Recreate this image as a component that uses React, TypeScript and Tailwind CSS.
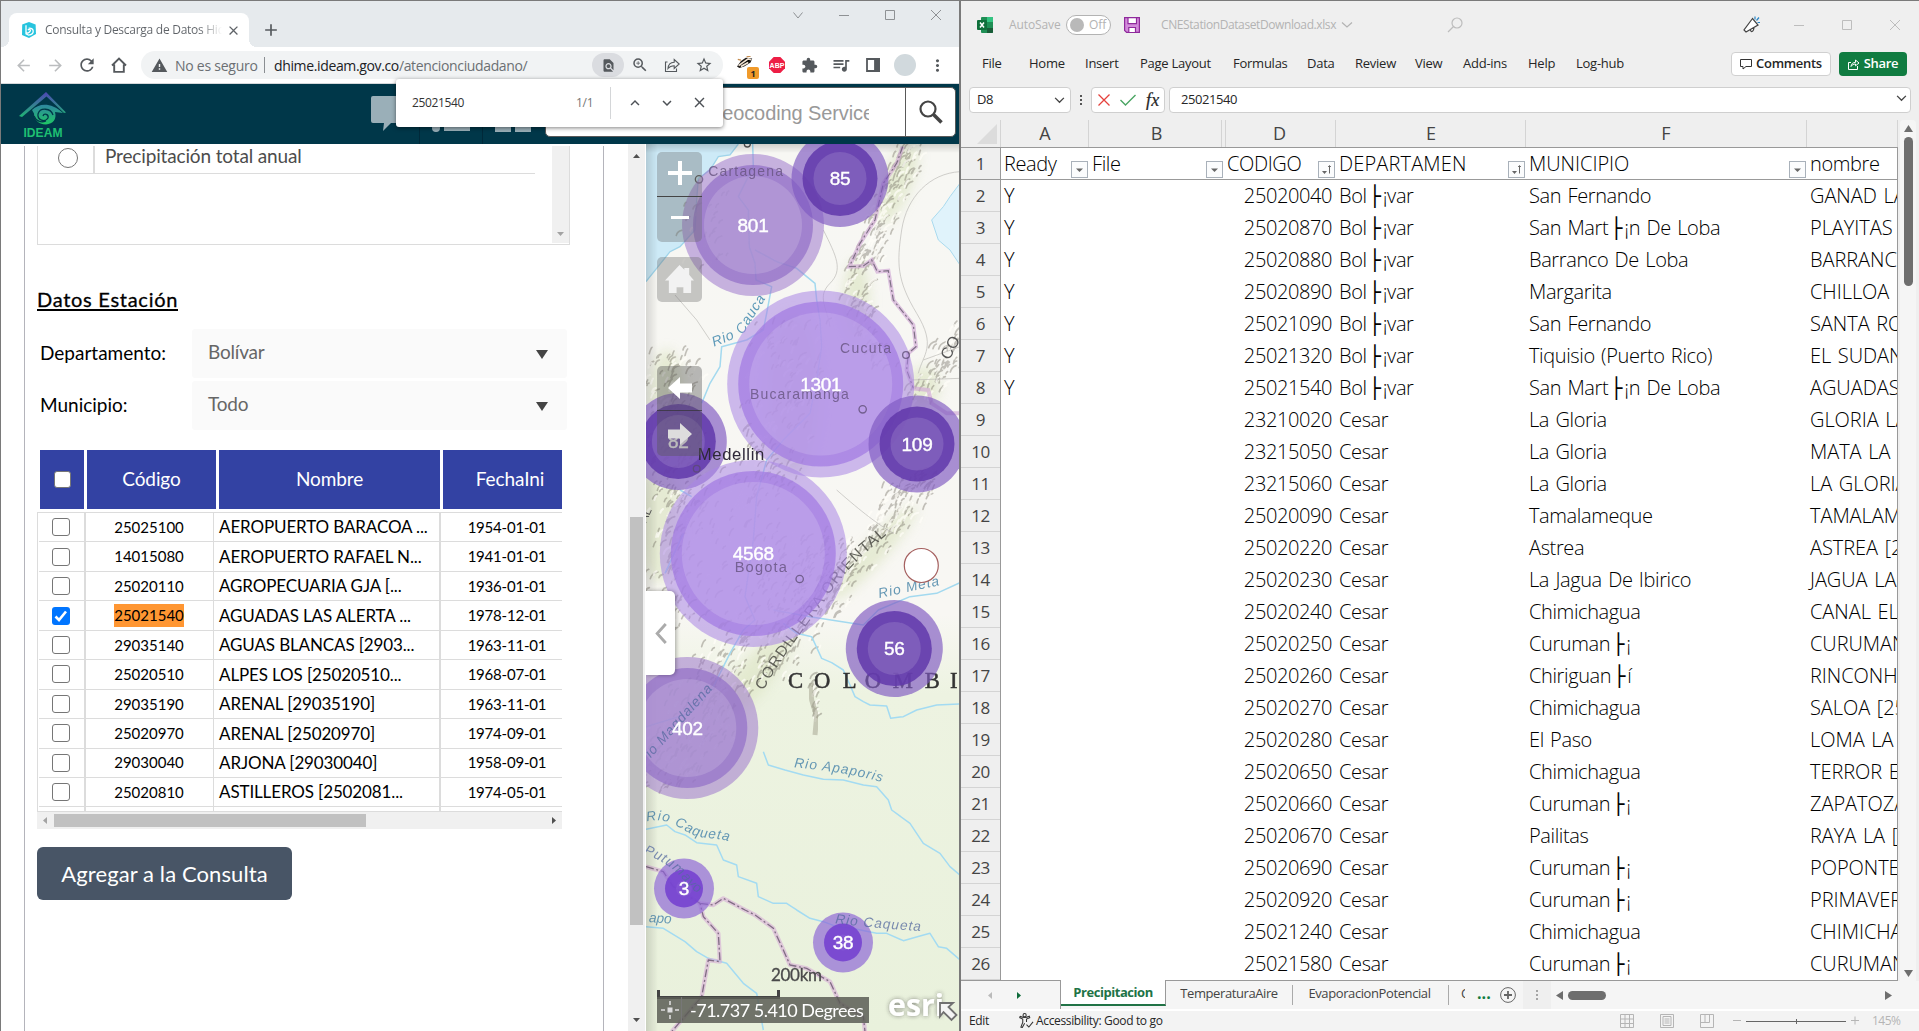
import React from 'react';
import {
  MdAdd, MdArrowBack, MdArrowForward, MdClose, MdExtension, MdFindInPage, MdKeyboardArrowDown,
  MdKeyboardArrowUp, MdMoreVert, MdQueueMusic, MdRefresh, MdStarBorder, MdWarning, MdZoomIn,
} from 'react-icons/md';

const UI = "font-['Open_Sans','Noto_Sans',sans-serif]";
const WEB = "font-['Lato','Open_Sans',sans-serif]";

/* ---------------------------------------------------------------- browser */

function Tri({ dir, className }: { dir: 'up' | 'down' | 'left' | 'right'; className: string }) {
  const d = { up: 'M0 10 5 0 10 10Z', down: 'M0 0H10L5 10Z', left: 'M10 0V10L0 5Z', right: 'M0 0 10 5 0 10Z' }[dir];
  return (
    <svg viewBox="0 0 10 10" preserveAspectRatio="none" className={className} fill="currentColor">
      <path d={d} />
    </svg>
  );
}

function TabStrip() {
  return (
    <div className="flex h-[46px] shrink-0 bg-[#e6eaed]">
      <div className="flex w-2 items-end overflow-hidden"><div className="h-2 w-2 bg-[radial-gradient(circle_at_0_0,#e6eaed_8px,#fff_8px)]" /></div>
      <div className="mt-3 flex w-[240px] items-center rounded-t-lg bg-white">
        <svg viewBox="0 0 16 16" className="ml-3 size-4">
          <path d="M8 0 14.6 2.6 15 12 8 16 1 13 1.2 2.6Z" fill="#27c4de" />
          <path d="M5 3.2v8.6l2.6 1.4c3-.4 4.8-2.2 4.6-4.4-.3-2-2.3-3-4.600-2.400M5 11.400c2.400-.2 4-1.200 4.400-2.800.2-1.300-1.600-1.800-2.500-.5" fill="none" stroke="#fff" strokeWidth="1.300" />
        </svg>
        <div className="ml-[8px] w-[177px] overflow-hidden whitespace-nowrap bg-gradient-to-r from-[#5f6368] from-87% to-transparent bg-clip-text text-[12px] tracking-[-0.27px] text-transparent">
          Consulta y Descarga de Datos Hidro
        </div>
        <MdClose className="ml-[4px] size-[15px] text-[#5f6368]" />
      </div>
      <div className="flex w-2 items-end"><div className="h-2 w-2 bg-[radial-gradient(circle_at_100%_0,#e6eaed_8px,#fff_8px)]" /></div>
      <MdAdd className="ml-[4px] mt-[19px] size-[20px] text-[#55595d]" />
      <div className="ml-auto mt-[6px] flex h-4 items-center gap-[30px] pr-[15px]">
        <svg viewBox="0 0 16 16" className="size-4" fill="none" stroke="#8e9194"><path d="M3.500 5.500 8 11l4.500-5.500" /></svg>
        <svg viewBox="0 0 16 16" className="size-4" fill="none" stroke="#8e9194"><path d="M3 8.500h10" /></svg>
        <svg viewBox="0 0 16 16" className="size-4" fill="none" stroke="#8e9194"><path d="M3.500 3.500h9v9h-9Z" /></svg>
        <svg viewBox="0 0 16 16" className="size-4" fill="none" stroke="#8e9194"><path d="m3 3 10 10M13 3 3 13" /></svg>
      </div>
    </div>
  );
}

function Cell({ children, className = '' }: { children: React.ReactNode; className?: string }) {
  return <div className={`flex h-full w-8 shrink-0 items-center justify-center ${className}`}>{children}</div>;
}

function Toolbar() {
  return (
    <div className="flex h-[37px] shrink-0 items-center border-b border-[#d5d8db] bg-white pl-[6px] text-[#55595d]">
      <Cell className="text-[#bbbdbf]"><MdArrowBack className="size-[19px]" /></Cell>
      <Cell className="text-[#bbbdbf]"><MdArrowForward className="size-[19px]" /></Cell>
      <Cell><MdRefresh className="size-[20px]" /></Cell>
      <Cell>
        <svg viewBox="0 0 16 16" className="size-4" fill="none" stroke="currentColor" strokeWidth="1.900"><path d="M1 8.500 8 1.500l7 7M3.200 7.500v7.400h9.600V7.500" /></svg>
      </Cell>
      <div className="ml-[6px] flex h-7 w-[582px] items-center rounded-full bg-[#f1f3f4]">
        <MdWarning className="ml-[10px] size-[17px]" />
        <span className="ml-[7px] w-[83px] whitespace-nowrap text-[14px] tracking-[-0.25px] text-[#6b6f73]">No es seguro</span>
        <span className="ml-[6px] h-4 w-px bg-[#8a8e92]" />
        <span className="ml-[9px] w-[318px] whitespace-nowrap text-[14px] tracking-[-0.36px] text-[#6b6f73]">
          <span className="text-[#202124]">dhime.ideam.gov.co</span>/atencionciudadano/
        </span>
        <Cell><span className="flex h-6 w-8 items-center justify-center rounded-full bg-[#dadce0]"><MdFindInPage className="size-[15px]" /></span></Cell>
        <Cell><MdZoomIn className="size-[18px]" /></Cell>
        <Cell>
          <svg viewBox="0 0 16 16" className="size-4" fill="none" stroke="currentColor" strokeWidth="1.100"><path d="M3.500 5H1.500v9.500h11v-3M4 11.500c.3-4.500 2.500-6 6.200-6.200V2.500l5 4.500-5 4.500V8.700c-3 0-4.700.8-6.200 2.800Z" /></svg>
        </Cell>
        <Cell><MdStarBorder className="size-[18px]" /></Cell>
      </div>
      <div className="ml-[6px] flex h-full">
        <Cell>
          <div className="relative size-5">
            <svg viewBox="0 0 20 16" className="absolute left-[2px] top-[1px] h-[13px] w-4">
              <path d="M0 13 5 6l6-4 8 1-2 5-8 5-6 2Z" fill="#1d1a18" /><path d="M2 12 14 3.500l4 1M5 13l9-5" stroke="#f3e6d6" strokeWidth="2" />
              <path d="M1 4l4 1M12 1l5-1" stroke="#c48b4d" strokeWidth="1.500" />
            </svg>
            <span className="absolute left-[12px] top-[12px] flex h-3 w-3 items-center justify-center rounded-[2px] bg-[#f09a2a] text-[9px] font-bold leading-none text-[#222]">1</span>
          </div>
        </Cell>
        <Cell>
          <svg viewBox="0 0 16 16" className="size-4"><path d="M4.700 0h6.600L16 4.700v6.600L11.300 16H4.700L0 11.300V4.700Z" fill="#ed1e45" /><text x="8" y="10.600" textAnchor="middle" fontSize="7" fontWeight="700" fontFamily="Liberation Sans" fill="#fff">ABP</text></svg>
        </Cell>
        <Cell><MdExtension className="size-[17px]" /></Cell>
        <Cell><MdQueueMusic className="size-[20px]" /></Cell>
        <Cell>
          <svg viewBox="0 0 14 14" className="size-[14px]" fill="none" stroke="currentColor" strokeWidth="1.800"><path d="M1 1h12v12H1Z" /><path d="M9 1h4v12H9Z" fill="currentColor" /></svg>
        </Cell>
        <Cell><span className="size-[22px] rounded-full bg-[#d1d9dd]" /></Cell>
        <Cell><MdMoreVert className="size-[19px]" /></Cell>
      </div>
    </div>
  );
}

function FindBar() {
  return (
    <div className="absolute left-[395px] top-[78px] z-20 flex h-[48px] w-[327px] items-center rounded-[3px] bg-white shadow-[0_1px_4px_rgba(0,0,0,0.5)]">
      <span className="ml-4 w-[164px] text-[12px] tracking-[-0.37px] text-[#333]">25021540</span>
      <span className="w-[34px] text-[12px] tracking-[-0.3px] text-[#777]">1/1</span>
      <span className="h-8 w-px bg-[#d4d6d8]" />
      <div className="ml-2 flex text-[#4d5156]">
        <Cell><MdKeyboardArrowUp className="size-[18px]" /></Cell>
        <Cell><MdKeyboardArrowDown className="size-[18px]" /></Cell>
        <Cell><MdClose className="size-[17px]" /></Cell>
      </div>
    </div>
  );
}

function SiteHeader() {
  return (
    <div className="flex h-[60px] shrink-0 items-start bg-[#003749]">
      <svg viewBox="0 0 48 46" className="ml-[18px] mt-2 h-[46px] w-12">
        <defs>
          <linearGradient id="roof" x1="0" y1="0" x2="0" y2="1"><stop offset="0" stopColor="#4f45b5" /><stop offset="1" stopColor="#1fb573" /></linearGradient>
          <linearGradient id="eye" x1="0" y1="0" x2="0" y2="1"><stop offset="0" stopColor="#2f86a0" /><stop offset="1" stopColor="#1fc765" /></linearGradient>
        </defs>
        <path d="M0 24 27 0 47 20.500 45 21 27.500 4.500 3 25Z" fill="url(#roof)" />
        <path d="M13 18c7-7 19-8 31 3l-8-1c2 7-2 12-9 12.500-8-.5-12-5-12-11Z" fill="url(#eye)" />
        <path d="M34 23c-2-7-13-8-15-1-1 6 7 9 10 4 1-4-4-5-5-2M15 24c2 5 7 7 12 5" fill="none" stroke="#003749" strokeWidth="1.300" />
        <text x="4.500" y="45" fontFamily="Liberation Sans" fontSize="12" fontWeight="700" fill="#1fc072" textLength="39" lengthAdjust="spacingAndGlyphs">IDEAM</text>
      </svg>
      <svg viewBox="0 0 34 36" className="ml-[304px] mt-3 h-9 w-[34px] text-[#9aafb8]" fill="currentColor"><path d="M2 0h32v27H20l-8 8 1-8H2Q0 27 0 25V2Q0 0 2 0Z" /></svg>
      <div className="ml-[14px] h-full w-px bg-[#00293a]" />
      <div className="ml-3 mt-[37px] flex h-3 items-start gap-1 text-[#9aafb8]"><span className="mt-[3px] size-2 rounded-full bg-current" /><span className="mt-[5px] h-[5px] w-[26px] bg-current" /></div>
      <div className="ml-3 h-full w-px bg-[#00293a]" />
      <div className="ml-[12px] mt-[37px] flex gap-1"><span className="h-[11px] w-4 bg-[#9aafb8]" /><span className="h-[11px] w-4 bg-[#9aafb8]" /></div>
      <div className="ml-auto mr-[3px] mt-[3px] flex h-[50px] w-[411px] rounded-[5px] border border-[#595959] bg-white">
        <div className="flex flex-1 items-center justify-end pr-[36px]">
          <div className="w-[323px] overflow-hidden whitespace-nowrap pt-px text-right font-['Liberation_Sans',sans-serif] text-[20px] tracking-[-0.1px] text-[#999]">
            <span className="mr-[-5px]">Esri World Geocoding Service</span>
          </div>
        </div>
        <div className="flex w-[50px] items-center justify-center border-l border-[#595959]">
          <svg viewBox="0 0 24 24" className="size-6" fill="none" stroke="#444"><circle cx="9" cy="9" r="7.500" strokeWidth="2.200" /><path d="m14.500 14.500 8 8" strokeWidth="3.600" /></svg>
        </div>
      </div>
    </div>
  );
}

const STATIONS: [string, string, string][] = [
  ['25025100', 'AEROPUERTO BARACOA ...', '1954-01-01'],
  ['14015080', 'AEROPUERTO RAFAEL N...', '1941-01-01'],
  ['25020110', 'AGROPECUARIA GJA [...', '1936-01-01'],
  ['25021540', 'AGUADAS LAS ALERTA ...', '1978-12-01'],
  ['29035140', 'AGUAS BLANCAS [2903...', '1963-11-01'],
  ['25020510', 'ALPES LOS [25020510...', '1968-07-01'],
  ['29035190', 'ARENAL [29035190]', '1963-11-01'],
  ['25020970', 'ARENAL [25020970]', '1974-09-01'],
  ['29030040', 'ARJONA [29030040]', '1958-09-01'],
  ['25020810', 'ASTILLEROS [2502081...', '1974-05-01'],
];

function Box({ on = false, header = false }: { on?: boolean; header?: boolean }) {
  if (on)
    return (
      <span className="flex size-[18px] items-center justify-center rounded-[3px] bg-[#0075ff]">
        <svg viewBox="0 0 14 14" className="size-[14px]" fill="none" stroke="#fff" strokeWidth="2.600"><path d="m1.500 7.500 3.500 3.500L12 2.500" /></svg>
      </span>
    );
  return <span className={`rounded-[3px] border-[1.5px] border-[#767676] bg-white ${header ? 'size-[17px]' : 'size-[18px]'}`} />;
}

function Select({ label, value }: { label: string; value: string }) {
  return (
    <div className="flex h-[49px] items-center">
      <span className="w-[152px] text-[19px]">{label}</span>
      <div className="flex h-full w-[375px] items-center justify-between rounded-[3px] bg-[#fafafa] pl-4 pr-[19px]">
        <span className="pb-[3px] text-[19px] tracking-[-0.2px] text-[#666]">{value}</span>
        <Tri dir="down" className="mt-[2px] h-[9px] w-3 text-[#444]" />
      </div>
    </div>
  );
}

function QueryPanel() {
  return (
    <div className={`flex w-[645px] shrink-0 bg-white ${WEB} text-black`}>
      <div className="ml-[23px] mt-[2px] w-[580px] border-x border-[#b4b4bb] pl-3">
        <div className="flex h-[99px] w-[533px] border-x border-b border-[#dcdcdc]">
          <div className="ml-[1px] h-7 w-[496px] border-b border-[#dcdcdc]">
            <div className="flex h-full">
              <div className="flex w-[56px] justify-center border-r-2 border-[#dcdcdc] pl-[3px]"><span className="mt-[2px] size-5 rounded-full border-[1.5px] border-[#767676]" /></div>
              <span className="ml-[10px] mt-[-4px] text-[19px] leading-7 tracking-[-0.15px] text-[#4c4c4c]">Precipitación total anual</span>
            </div>
          </div>
          <div className="ml-auto flex h-[97px] w-[17px] items-end justify-center bg-[#f0f0f0] pb-[7px]"><Tri dir="down" className="h-1 w-[7px] text-[#a3a3a3]" /></div>
        </div>
        <div className="mt-[39px] h-[35px]"><span className="inline-block h-[27px] border-b-2 border-black text-[20px] leading-[31px] tracking-[0.72px] [-webkit-text-stroke:0.3px_#000]">Datos Estación</span></div>
        <div className="ml-[3px] mt-[10px] flex flex-col gap-[3px]">
          <Select label="Departamento:" value="Bolívar" />
          <Select label="Municipio:" value="Todo" />
        </div>
        <div className="mt-[20px] w-[525px] overflow-hidden">
          <div className="ml-[3px] flex h-[59px] w-[560px] gap-[3px] text-[19px] tracking-[-0.1px] text-white [&>div]:flex [&>div]:items-center [&>div]:justify-center [&>div]:bg-[#3342a3]">
            <div className="w-11"><Box header /></div>
            <div className="w-[129px]">Código</div>
            <div className="w-[221px]">Nombre</div>
            <div className="w-[134px]">FechaIni</div>
          </div>
          <div className="mt-[3px] h-[300px] overflow-hidden border-b border-l border-t border-[#dcdcdc]">
            {STATIONS.map((s) => (
              <div key={s[0]} className="ml-[1px] flex h-[29.45px] w-[560px] border-b-[1.5px] border-[#dcdcdc]">
                <div className="flex w-[47px] items-center justify-center border-r-2 border-[#dcdcdc] pr-[2px]"><Box on={s[0] === '25021540'} /></div>
                <div className="flex w-[128px] items-center justify-center border-r border-[#dcdcdc] pr-px text-[15px]">
                  <span className={s[0] === '25021540' ? 'bg-[#ff9632]' : ''}>{s[0]}</span>
                </div>
                <div className="flex w-[227px] items-center whitespace-nowrap border-r-2 border-[#dcdcdc] pl-[5px] text-[17px] tracking-[-0.13px]">{s[1]}</div>
                <div className="flex w-[132px] items-center justify-center text-[15px] tracking-[-0.2px]">{s[2]}</div>
              </div>
            ))}
            <div className="ml-[1px] flex h-3 w-[560px]"><div className="w-[47px] border-r-2 border-[#dcdcdc]" /><div className="w-[128px] border-r border-[#dcdcdc]" /><div className="w-[227px] border-r-2 border-[#dcdcdc]" /></div>
          </div>
          <div className="flex h-[17px] items-center bg-[#f0f0f0]">
            <Tri dir="left" className="ml-[6px] h-[7px] w-1 text-[#a3a3a3]" />
            <div className="ml-[7px] h-[13px] w-[312px] bg-[#c1c1c1]" />
            <Tri dir="right" className="ml-auto mr-[6px] h-[7px] w-1 text-[#505050]" />
          </div>
        </div>
        <div className="mt-[18px] flex h-[53px] w-[255px] items-center justify-center rounded-md bg-[#485566] pb-px text-[22px] tracking-[0.1px] text-white">Agregar a la Consulta</div>
      </div>
      <div className="ml-[24px] flex w-[17px] flex-col items-center bg-[#f0f0f0]">
        <Tri dir="up" className="mt-[10px] h-1 w-[7px] text-[#505050]" />
        <div className="mt-[359px] h-[408px] w-[13px] bg-[#c1c1c1]" />
        <Tri dir="down" className="mt-[93px] h-1 w-[7px] text-[#505050]" />
      </div>
    </div>
  );
}

/* -------------------------------------------------------------------- map */

type Pt = [number, number];
/* Mountain ranges as centre lines with a width, in map units of a third of a pixel. */
const RANGES: { pts: Pt[]; w: number; n: number }[] = [
  { pts: [[850, 20], [770, 190], [690, 400]], w: 55, n: 170 },
  { pts: [[670, 420], [700, 560], [760, 680]], w: 60, n: 90 },
  { pts: [[470, 520], [480, 760], [420, 950], [330, 1100], [260, 1380]], w: 150, n: 240 },
  { pts: [[120, 640], [110, 800], [150, 1000], [120, 1240], [130, 1480]], w: 110, n: 300 },
  { pts: [[1000, 560], [930, 680], [850, 790]], w: 70, n: 90 },
  { pts: [[880, 1000], [780, 1140], [660, 1270], [560, 1400], [430, 1620]], w: 95, n: 360 },
  { pts: [[560, 1180], [470, 1360], [300, 1560], [200, 1750], [70, 1960]], w: 160, n: 420 },
  { pts: [[545, 1610], [560, 1760]], w: 14, n: 26 },
  { pts: [[220, 130], [200, 260], [230, 420]], w: 90, n: 30 },
];

function hillshade() {
  let seed = 7;
  const rnd = () => ((seed = (seed * 16807) % 2147483647) / 2147483647);
  const dark: string[] = [];
  const light: string[] = [];
  for (const r of RANGES) {
    for (let i = 0; i < r.n; i++) {
      const t = rnd() * (r.pts.length - 1);
      const k = Math.floor(t);
      const f = t - k;
      const [ax, ay] = r.pts[k];
      const [bx, by] = r.pts[k + 1];
      const x = ax + (bx - ax) * f + (rnd() + rnd() - 1) * r.w;
      const y = ay + (by - ay) * f + (rnd() - 0.5) * 30;
      const l = 6 + rnd() * 15;
      const a = 0.3 + rnd() * 0.9;
      const d = `M${x.toFixed(0)} ${y.toFixed(0)}q${(l * 0.2).toFixed(0)} ${(-l * 0.8).toFixed(0)} ${(l * a).toFixed(0)} ${(-l).toFixed(0)}`;
      (i % 3 ? dark : light).push(d);
    }
  }
  return { dark: dark.join(''), light: light.join('') };
}
const HILLS = hillshade();

type Tone = 'deep' | 'violet' | 'mid' | 'soft';
const TONES: Record<Tone, { outer: string; ring: string; core: string }> = {
  deep: { outer: 'rgba(126,88,193,.66)', ring: 'rgba(98,57,171,.86)', core: 'rgba(255,255,255,.13)' },
  violet: { outer: 'rgba(140,100,214,.68)', ring: 'rgba(118,66,208,.9)', core: 'rgba(255,255,255,.06)' },
  mid: { outer: 'rgba(158,122,205,.56)', ring: 'rgba(148,115,200,.74)', core: 'rgba(255,255,255,.15)' },
  soft: { outer: 'rgba(170,134,229,.56)', ring: 'rgba(163,124,227,.74)', core: 'rgba(255,255,255,.15)' },
};
const CLUSTERS: { x: number; y: number; r: number; n: number; tone: Tone }[] = [
  { x: 107, y: 81, r: 71, n: 801, tone: 'mid' },
  { x: 194, y: 34.5, r: 48.5, n: 85, tone: 'deep' },
  { x: 174.7, y: 240, r: 93.5, n: 1301, tone: 'soft' },
  { x: 32.3, y: 297.5, r: 48.5, n: 82, tone: 'deep' },
  { x: 271, y: 300, r: 48.5, n: 109, tone: 'deep' },
  { x: 107.3, y: 409.5, r: 93.5, n: 4568, tone: 'soft' },
  { x: 41.3, y: 584, r: 71, n: 402, tone: 'mid' },
  { x: 248.3, y: 504.5, r: 48.5, n: 56, tone: 'deep' },
  { x: 38, y: 744.5, r: 30, n: 3, tone: 'violet' },
  { x: 197, y: 798.5, r: 30, n: 38, tone: 'violet' },
];

function MapCanvas() {
  return (
    <svg viewBox="0 0 313 887" className="absolute inset-0 h-[887px] w-[313px]" fontFamily="Liberation Sans, Arial, sans-serif">
      <defs>
        <linearGradient id="land" x1="0" y1="0" x2="0" y2="1">
          <stop offset="0" stopColor="#f7f7f3" /><stop offset=".53" stopColor="#f8f7f3" /><stop offset=".62" stopColor="#edf3e1" /><stop offset="1" stopColor="#e9f1dc" />
        </linearGradient>
        <filter id="soft"><feGaussianBlur stdDeviation="18" /></filter>
        <filter id="hair"><feGaussianBlur stdDeviation="2.200" /></filter>
        <filter id="glow" x="-30%" y="-30%" width="160%" height="160%"><feDropShadow dx="0" dy="0" stdDeviation="2" floodColor="#333" floodOpacity=".55" /></filter>
        <linearGradient id="edge"><stop offset="0" stopColor="#000" stopOpacity=".13" /><stop offset="1" stopColor="#000" stopOpacity="0" /></linearGradient>
        <linearGradient id="edgeTop" x1="0" y1="0" x2="0" y2="1"><stop offset="0" stopColor="#000" stopOpacity=".16" /><stop offset="1" stopColor="#000" stopOpacity="0" /></linearGradient>
      </defs>
      <rect width="313" height="887" fill="url(#land)" />
      <g transform="scale(.33333) translate(-48 -12)">
        <path d="M48 12H325L300 45 265 50 240 90 205 115 200 180 195 270 150 320 120 335 80 385 48 425Z" fill="#cdeaf7" />
        <path d="M325 12 300 45 265 50 240 90 205 115 200 180 195 270 150 320 120 335 80 385 48 425" fill="none" stroke="#9fd4ea" strokeWidth="4" />
        <path d="M990 130 960 170 940 200 905 240 925 300 960 330 990 375V130Z" fill="#e0f3fb" stroke="#a9daee" strokeWidth="3" />
        <g filter="url(#soft)" fill="#dfe6c8" opacity=".75">
          <ellipse cx="800" cy="130" rx="45" ry="130" transform="rotate(22 800 130)" /><ellipse cx="680" cy="480" rx="40" ry="120" />
          <ellipse cx="110" cy="760" rx="50" ry="130" /><ellipse cx="90" cy="1150" rx="60" ry="180" />
          <ellipse cx="730" cy="1240" rx="34" ry="190" transform="rotate(42 730 1240)" /><ellipse cx="880" cy="740" rx="50" ry="60" />
          <ellipse cx="490" cy="760" rx="80" ry="240" /><ellipse cx="380" cy="1600" rx="50" ry="160" transform="rotate(38 380 1600)" />
        </g>
        <g fill="none" strokeLinecap="round" filter="url(#hair)">
          <path d={HILLS.dark} stroke="#716c5e" strokeWidth="5" opacity=".4" />
          <path d={HILLS.light} stroke="#fffef8" strokeWidth="6" opacity=".7" />
        </g>
        <g fill="none" stroke="#bdbcb8" strokeWidth="3">
          <path d="M990 95C900 100 830 170 815 270S800 420 860 520 880 640 865 700M580 270C620 350 640 390 600 430S590 500 600 560M135 465 200 540 240 600M620 1050C700 1120 740 1150 790 1180M880 660 990 620M845 720 990 715" opacity=".7" />
        </g>
        <g fill="none" stroke="#a3d9ef" strokeWidth="4.500" strokeLinejoin="round">
          <path d="M368 12 370 80 325 170 355 210 358 320 375 370 378 420 425 440 410 520 400 570 350 600 275 620 270 680 240 730 215 790M375 330 440 365 500 385 555 430 560 480 570 540 575 620 560 720 540 820 460 900 410 960 380 1070 370 1200 345 1370 375 1440 340 1470 300 1540 250 1640 180 1720 48 1760M150 1050 185 1070M160 1180 105 1300" />
          <path d="M430 1410 540 1430 700 1455 745 1410 840 1370 920 1360 990 1328" />
        </g>
        <path d="M818 20 800 70 760 130 735 240 690 310 658 380 700 378 725 360 742 395 775 392 790 480 850 555 858 620 835 640 830 690 850 745 895 750 905 790 950 820 990 820" fill="none" stroke="#cfa8d4" strokeWidth="12" opacity=".65" />
        <path d="M818 20 800 70 760 130 735 240 690 310 658 380 700 378 725 360 742 395 775 392 790 480 850 555 858 620 835 640 830 690 850 745" fill="none" stroke="#7d6f84" strokeWidth="3.500" strokeDasharray="22 8 6 8" />
        <g fill="none" stroke="#555" strokeWidth="4"><circle cx="207" cy="118" r="11" /><circle cx="352" cy="12" r="9" /></g>
        <text transform="translate(958 662) rotate(-62)" fontSize="48" fill="#555">CO</text>
        <text transform="translate(48 1150) rotate(-66)" fontSize="36" fill="#555">AL</text>
        <text transform="translate(252 620) rotate(-22)" fontSize="42" fontStyle="italic" fill="#5f9bb9" letterSpacing="2">Rio</text>
        <text transform="translate(338 585) rotate(-58)" fontSize="42" fontStyle="italic" fill="#5f9bb9" letterSpacing="2">Cauca</text>
      </g>
      <g transform="scale(.33333) translate(-48 1278)">
        <path d="M540 340 545 390 560 440 555 495" fill="none" stroke="#9a9884" strokeWidth="15" opacity=".45" filter="url(#hair)" />
        <g fill="none" stroke="#a3dbf2" strokeWidth="4.500" strokeLinejoin="round">
          <path d="M460 160 500 190 545 200 575 265 605 278 640 300 660 345 675 380 700 395 720 405 770 408 782 445 820 440 860 420 920 405 990 402" />
          <path d="M400 545 415 585 465 600 520 615 580 628 640 630 700 645 740 650 775 690 785 720 840 760 880 820 930 850 960 890 990 915" />
          <path d="M48 778 110 765 135 785 165 795 200 818 260 825 280 870 320 885 325 920 380 940 385 980 430 1000 470 1000 500 1020 540 1045 580 1055 620 1070 680 1078 740 1090 770 1090 820 1112 870 1098 900 1090 925 1130 950 1135 990 1170" />
          <path d="M48 1070 100 1075 165 1115 200 1145 235 1165 290 1180 340 1240 380 1270 400 1380" />
        </g>
        <g fill="none" strokeLinejoin="round">
          <path d="M48 890 100 905 130 950 210 1000 220 1040 265 1090 270 1175 235 1170 215 1280 125 1385M210 1000 250 1005 280 985 345 1020 375 1035 430 1075 460 1140 480 1185 530 1195 600 1235 630 1300 700 1340 705 1385" stroke="#d6acd6" strokeWidth="13" opacity=".6" />
          <path d="M48 890 100 905 130 950 210 1000 220 1040 265 1090 270 1175 235 1170 215 1280 125 1385M210 1000 250 1005 280 985 345 1020 375 1035 430 1075 460 1140 480 1185 530 1195 600 1235 630 1300 700 1340 705 1385" stroke="#806c84" strokeWidth="4" strokeDasharray="24 8 6 8" />
        </g>
        <path id="cord" d="M400 362 C450 270 520 180 600 70 S720 -60 775 -110" fill="none" />
        <text fontSize="46" fill="#4a4a44" opacity=".85"><textPath href="#cord" textLength="600">CORDILLERA ORIENTAL</textPath></text>
        <g fill="#6497b4" fontSize="41" fontStyle="italic" letterSpacing="3">
          <text transform="translate(748 84) rotate(-12)">Rio Meta</text>
          <path id="apa" d="M492 592Q640 605 750 635" fill="none" /><text><textPath href="#apa">Rio Apaporis</textPath></text>
          <path id="caq" d="M50 755C110 740 140 770 180 790S250 800 290 812" fill="none" /><text><textPath href="#caq">Rio Caqueta</textPath></text>
          <text x="56" y="1056" transform="rotate(4 56 1056)" letterSpacing="0">apo</text>
        </g>
        <text x="474" y="354" fontFamily="Liberation Serif, serif" fontSize="68" fill="#333" stroke="#333" strokeWidth="1.500"><tspan x="474 552 638 704 788 884 960">COLOMBI</tspan></text>
      </g>
      <rect width="12" height="887" fill="url(#edge)" />
      <rect width="313" height="9" fill="url(#edgeTop)" />
      {CLUSTERS.map((c) => {
        const t = TONES[c.tone];
        return (
          <g key={c.n}>
            <circle cx={c.x} cy={c.y} r={c.r} fill={t.outer} />
            <circle cx={c.x} cy={c.y} r={c.r - 11} fill={t.ring} />
            <circle cx={c.x} cy={c.y} r={c.r - 22} fill={t.core} />
          </g>
        );
      })}
      <g transform="scale(.33333) translate(-48 -12)">
        <g fill="#66537f" fontSize="42" letterSpacing="3.500" opacity=".8">
          <text x="235" y="108">Cartagena</text>
          <text x="630" y="640" letterSpacing="4">Cucuta</text>
          <text x="360" y="776" letterSpacing="3.500">Bucaramanga</text>
          <text x="314" y="1295" letterSpacing="3.500" fontSize="44">Bogota</text>
        </g>
        <text x="203" y="961" fontSize="50" letterSpacing="2" fill="#2e2838">Medellin</text>
        <g fill="none" stroke="#5a4a70" strokeWidth="4" opacity=".75"><circle cx="828" cy="645" r="10" /><circle cx="698" cy="808" r="11" /><circle cx="200" cy="986" r="10" /><circle cx="509" cy="1317" r="11" /></g>
      </g>
      <g transform="scale(.33333) translate(-48 1278)" fill="#54699f" fontSize="41" fontStyle="italic" letterSpacing="3" opacity=".75">
        <path id="put" d="M40 850Q120 880 160 930T230 970" fill="none" /><text><textPath href="#put">Putumayo</textPath></text>
        <path id="caq2" d="M615 1060Q740 1075 870 1083" fill="none" /><text><textPath href="#caq2">Rio Caqueta</textPath></text>
        <text transform="translate(62 565) rotate(-48)">io Magdalena</text>
      </g>
      {CLUSTERS.map((c) => (
        <text key={c.n} x={c.x} y={c.y + 6.500} textAnchor="middle" fontSize="19" fill="#fff" stroke="#fff" strokeWidth=".4" letterSpacing="-.3">{c.n}</text>
      ))}
      <circle cx="275.300" cy="421.500" r="17" fill="#fff" stroke="#a5605f" strokeWidth="1.200" />
      <path d="M12.500 846v7.500h120V846" fill="none" stroke="#444" strokeWidth="3" />
      <text x="125" y="837" fontFamily="Lato" fontSize="17" fill="#4a4a4a" stroke="#4a4a4a" strokeWidth=".3" letterSpacing="-.3">200km</text>
      <text x="242" y="872" fontFamily="Open Sans" fontSize="31" fontWeight="700" fill="#fff" filter="url(#glow)" textLength="56" lengthAdjust="spacingAndGlyphs">esri</text>
      <path d="M294 859h13l-4.500 4 8 8-5 5-8-8-3.500 4.500Z" fill="#f4f4f4" stroke="#707070" strokeWidth="1.800" />
    </svg>
  );
}

const MAP_BTN = 'absolute left-[11px] w-[45px] overflow-hidden rounded-[5px] text-white';

function MapView() {
  return (
    <div className="relative w-[313px] shrink-0 overflow-hidden">
      <MapCanvas />
      <div className={`${MAP_BTN} top-[8px] h-[90px] bg-[#666]/35`}>
        <div className="flex h-[45px] items-center justify-center border-b border-[#444]"><svg viewBox="0 0 24 24" className="mt-[-3px] size-6" stroke="#fff" strokeWidth="4"><path d="M12 0v24M0 12h24" /></svg></div>
        <div className="flex h-[45px] items-center justify-center"><span className="mt-[-5px] h-[3px] w-[18px] bg-white" /></div>
      </div>
      <div className={`${MAP_BTN} top-[113px] flex h-[45px] items-center justify-center bg-[#666]/35`}>
        <svg viewBox="0 0 30 30" className="size-[29px]" fill="#f2f2f2"><path d="M15 0 20 5V3h5v7l5 6h-3v13h-8v-6h-7v6H4V16H0Z" /></svg>
      </div>
      <div className={`${MAP_BTN} top-[222px] h-[90px] bg-[#555]/40`}>
        <div className="flex h-[45px] items-center justify-center border-b border-[#333]/70"><svg viewBox="0 0 24 22" className="h-[22px] w-6" fill="#fff"><path d="M0 11 12 0v6.500h12v9H12V22Z" /></svg></div>
        <div className="flex h-[45px] items-center justify-center"><svg viewBox="0 0 24 22" className="h-[22px] w-6" fill="#ddd"><path d="M24 11 12 0v6.500H0v9h12V22Z" /></svg></div>
      </div>
      <div className="absolute left-0 top-[447px] flex h-[84px] w-[29px] items-center justify-center rounded-r-[5px] bg-white shadow-[1px_0_4px_rgba(0,0,0,0.35)]">
        <svg viewBox="0 0 12 22" className="h-[21px] w-3" fill="none" stroke="#ababab" strokeWidth="3"><path d="M11 1 2 11l9 10" /></svg>
      </div>
      <div className={`absolute left-[11px] top-[853px] flex h-[26px] w-[212px] items-center bg-[#5a5d55]/85 ${WEB} text-white`}>
        <svg viewBox="0 0 18 18" className="ml-[4px] size-[18px]" fill="none" stroke="#ddd" strokeWidth="1.600"><path d="M9 0v4M9 14v4M0 9h4M14 9h4" /><path d="M6.500 6.500h5v5h-5Z" fill="#ddd" stroke="none" /></svg>
        <span className="ml-[2px] h-full w-px bg-[#777]" />
        <span className="ml-2 whitespace-nowrap text-[18px] tracking-[-0.5px]">-71.737 5.410 Degrees</span>
      </div>
    </div>
  );
}

function Browser() {
  return (
    <div className={`relative flex h-full w-[960px] shrink-0 flex-col overflow-hidden border-x border-t border-[#7a7a7a] bg-white ${UI}`}>
      <TabStrip />
      <Toolbar />
      <SiteHeader />
      <div className="flex h-[887px]"><QueryPanel /><MapView /></div>
      <FindBar />
    </div>
  );
}

/* ------------------------------------------------------------ spreadsheet */

const MENU: [string, string][] = [
  ['File', 'w-[47px]'], ['Home', 'w-[56px]'], ['Insert', 'w-[55px]'], ['Page Layout', 'w-[93px]'], ['Formulas', 'w-[74px]'], ['Data', 'w-[48px]'],
  ['Review', 'w-[60px]'], ['View', 'w-[48px]'], ['Add-ins', 'w-[65px]'], ['Help', 'w-[48px]'], ['Log-hub', 'w-[60px]'],
];

/* '|' and '~' stand for the mis-decoded accents in the imported names. */
const RECORDS: [string, string, string, string, string][] = [
  ['Y', '25020040', 'Bol|var', 'San Fernando', 'GANAD LA'],
  ['Y', '25020870', 'Bol|var', 'San Mart|n De Loba', 'PLAYITAS'],
  ['Y', '25020880', 'Bol|var', 'Barranco De Loba', 'BARRANCO'],
  ['Y', '25020890', 'Bol|var', 'Margarita', 'CHILLOA'],
  ['Y', '25021090', 'Bol|var', 'San Fernando', 'SANTA ROSA'],
  ['Y', '25021320', 'Bol|var', 'Tiquisio (Puerto Rico)', 'EL SUDAN'],
  ['Y', '25021540', 'Bol|var', 'San Mart|n De Loba', 'AGUADAS'],
  ['', '23210020', 'Cesar', 'La Gloria', 'GLORIA LA'],
  ['', '23215050', 'Cesar', 'La Gloria', 'MATA LA'],
  ['', '23215060', 'Cesar', 'La Gloria', 'LA GLORIA'],
  ['', '25020090', 'Cesar', 'Tamalameque', 'TAMALAMEQUE'],
  ['', '25020220', 'Cesar', 'Astrea', 'ASTREA [25'],
  ['', '25020230', 'Cesar', 'La Jagua De Ibirico', 'JAGUA LA'],
  ['', '25020240', 'Cesar', 'Chimichagua', 'CANAL EL'],
  ['', '25020250', 'Cesar', 'Curuman|', 'CURUMANI'],
  ['', '25020260', 'Cesar', 'Chiriguan~', 'RINCONHONDO'],
  ['', '25020270', 'Cesar', 'Chimichagua', 'SALOA [25'],
  ['', '25020280', 'Cesar', 'El Paso', 'LOMA LA'],
  ['', '25020650', 'Cesar', 'Chimichagua', 'TERROR EL'],
  ['', '25020660', 'Cesar', 'Curuman|', 'ZAPATOZA'],
  ['', '25020670', 'Cesar', 'Pailitas', 'RAYA LA ['],
  ['', '25020690', 'Cesar', 'Curuman|', 'POPONTE'],
  ['', '25020920', 'Cesar', 'Curuman|', 'PRIMAVERA'],
  ['', '25021240', 'Cesar', 'Chimichagua', 'CHIMICHAGUA'],
  ['', '25021580', 'Cesar', 'Curuman|', 'CURUMANI'],
];

function CellText({ value }: { value: string }) {
  const m = value.match(/^(.*?)([|~])(.*)$/);
  if (!m) return <>{value}</>;
  return (
    <>
      {m[1]}
      <span className="inline-block w-[16px] text-center font-['DejaVu_Sans_Mono',monospace] text-[20px] leading-none tracking-normal">├</span>
      {m[2] === '|' ? '¡' : 'í'}
      {m[3]}
    </>
  );
}

function Filter({ sorted = false }: { sorted?: boolean }) {
  return (
    <span className="mr-px mt-[13px] flex size-[17px] shrink-0 items-center justify-center border border-[#a9b1ba] bg-[#fbfcfd]">
      <svg viewBox="0 0 15 15" className="size-[15px]" fill="#666">
        {sorted ? <><path d="M3 9h5l-2.500 3Z" /><path d="M10.500 11.500V4M9.200 5l1.300-1.500L11.800 5" fill="none" stroke="#666" /></> : <path d="M4 6.500h7L7.500 10Z" />}
      </svg>
    </span>
  );
}

const ROW = 'flex h-8 shrink-0 text-[20px] leading-[32px] tracking-[-0.38px]';

function Sheet() {
  const heads: [string, string, string][] = [
    ['A', 'w-[88px]', 'pl-px'], ['B', 'w-[133px]', 'pl-[3px]'], ['', 'w-[4px]', ''], ['D', 'w-[110px]', 'pr-[2px]'], ['E', 'w-[190px]', 'pl-px'], ['F', 'w-[281px]', ''], ['', 'w-[91px]', ''],
  ];
  return (
    <div className="flex h-[861px] shrink-0">
      <div className="flex w-[937px] flex-col overflow-hidden">
        <div className="flex h-7 shrink-0 border-b border-[#999] text-[18px] text-[#444]">
          <div className="flex w-10 items-end justify-end border-r border-[#d4d4d4] pb-[3px] pr-[3px]"><svg viewBox="0 0 20 20" className="size-5" fill="#dcdcdc"><path d="M20 0v20H0Z" /></svg></div>
          {heads.map((h, i) => (
            <div key={i} className={`flex shrink-0 items-center justify-center border-r border-[#d4d4d4] ${h[1]} ${h[2]}`}>{h[0]}</div>
          ))}
        </div>
        <div className="flex min-h-0 flex-1 border-b border-[#999]">
          <div className="w-10 shrink-0 overflow-hidden border-r border-[#999]">
            {Array.from({ length: 26 }, (_, i) => (
              <div key={i} className={`flex h-8 items-center justify-center border-b text-[17px] tracking-[-0.4px] text-[#444] ${i === 0 ? 'border-[#999]' : 'border-[#d4d4d4]'}`}>{i + 1}</div>
            ))}
          </div>
          <div className="flex-1 overflow-hidden border-r border-[#999] bg-white font-light text-black">
            <div className={`${ROW} border-b border-[#999]`}>
              <div className="flex w-[88px] shrink-0 justify-between pl-[3px]">Ready<Filter /></div>
              <div className="flex w-[135px] shrink-0 justify-between pl-[3px]">File<Filter /></div>
              <div className="flex w-[112px] shrink-0 justify-between pl-[3px]">CODIGO<Filter sorted /></div>
              <div className="flex w-[190px] shrink-0 justify-between pl-[3px] tracking-[0.15px]">DEPARTAMEN<Filter sorted /></div>
              <div className="flex w-[281px] shrink-0 justify-between pl-[3px] tracking-[-0.03px]">MUNICIPIO<Filter /></div>
              <div className="pl-[3px]">nombre</div>
            </div>
            {RECORDS.map((r) => (
              <div key={r[1]} className={ROW}>
                <div className="w-[88px] shrink-0 pl-[3px]">{r[0]}</div>
                <div className="w-[135px] shrink-0" />
                <div className="w-[112px] shrink-0 pr-1 text-right tracking-[-0.4px]">{r[1]}</div>
                <div className="w-[190px] shrink-0 whitespace-nowrap pl-[3px]"><CellText value={r[2]} /></div>
                <div className="w-[281px] shrink-0 whitespace-nowrap pl-[3px] [word-spacing:1.5px]"><CellText value={r[3]} /></div>
                <div className="whitespace-nowrap pl-[3px] tracking-[-0.05px] [word-spacing:1.5px]">{r[4]}</div>
              </div>
            ))}
          </div>
        </div>
      </div>
      <div className="ml-[2px] flex w-4 flex-col items-center rounded-t bg-[#f5f5f5]">
        <Tri dir="up" className="mt-[5px] h-[7px] w-[9px] text-[#6e6e6e]" />
        <div className="mt-[5px] h-[149px] w-[9px] rounded-full bg-[#6e6e6e]" />
        <Tri dir="down" className="mt-auto mb-[4px] h-[7px] w-[9px] text-[#6e6e6e]" />
      </div>
    </div>
  );
}

function Excel() {
  return (
    <div className={`flex h-full w-[959px] flex-col overflow-hidden border-l border-t border-[#7a7a7a] bg-[#efefef] ${UI} text-[#262626]`}>
      <div className="flex h-[47px] shrink-0 items-center pl-4 text-[12px] text-[#b3b3b3]">
        <svg viewBox="0 0 16 16" className="size-4">
          <rect x="4" width="12" height="16" rx="1" fill="#1f8f55" /><path d="M10 0h5q1 0 1 1v4h-6Z" fill="#33c481" /><path d="M4 5h6v6H4Z" fill="#107c41" /><path d="M10 11h6v4q0 1-1 1h-5Z" fill="#185c37" />
          <rect y="3" width="10" height="10" rx="1" fill="#0f703b" /><path d="m3 5.500 4 5M7 5.500l-4 5" stroke="#fff" strokeWidth="1.500" />
        </svg>
        <span className="ml-4 w-[57px] tracking-[-0.1px]">AutoSave</span>
        <span className="flex h-5 w-[45px] items-center gap-[5px] rounded-full border border-[#b3b3b3] bg-white pl-[3px]"><span className="size-[14px] rounded-full bg-[#b9b9b9]" />Off</span>
        <svg viewBox="0 0 16 16" className="ml-[13px] size-4"><path d="M.6.6h14.800v14.800H2.600l-2-2Z" fill="#d38bdb" stroke="#8f2a9c" strokeWidth="1.200" /><path d="M4 .6h8.500v6H4ZM4.800 10.500h6.700v5H4.800Z" fill="#fff" stroke="#8f2a9c" strokeWidth="1.200" /></svg>
        <span className="ml-[21px] w-[180px] whitespace-nowrap tracking-[-0.4px]">CNEStationDatasetDownload.xlsx</span>
        <svg viewBox="0 0 12 8" className="h-2 w-3" fill="none" stroke="#b3b3b3" strokeWidth="1.200"><path d="m1 1.500 5 4.500 5-4.500" /></svg>
        <svg viewBox="0 0 16 16" className="ml-[94px] size-4" fill="none" stroke="#bdbdbd" strokeWidth="1.200"><circle cx="10" cy="6" r="5" /><path d="M6.500 9.500 1 15" /></svg>
        <div className="ml-auto flex items-center pr-[18px]">
          <svg viewBox="0 0 17 17" className="mr-[33px] size-[17px]" fill="none" stroke="#444" strokeWidth="1.200"><path d="M9.500 2.500 1 14l2 2 12-7ZM7.500 13.500c0 3 3 3 3.500-2" fill="#fff" /><path d="M12 3.500V.5M13.500 4.500 16 1.500M14.500 6.500h2.500" stroke="#2b88c8" /></svg>
          <svg viewBox="0 0 12 12" className="mr-9 size-3" stroke="#bdbdbd"><path d="M1 6.500h10" /></svg>
          <svg viewBox="0 0 12 12" className="mr-9 size-3" fill="none" stroke="#bdbdbd"><path d="M1.500 1.500h9v9h-9Z" /></svg>
          <svg viewBox="0 0 12 12" className="size-3" stroke="#bdbdbd"><path d="m1 1 10 10M11 1 1 11" /></svg>
        </div>
      </div>
      <div className="mt-px flex h-[30px] shrink-0 items-center pl-[21px] text-[13px] tracking-[-0.25px]">
        {MENU.map(([m, w]) => <span key={m} className={`${w} shrink-0 whitespace-nowrap`}>{m}</span>)}
        <div className="ml-auto flex gap-2 pr-3 font-semibold">
          <div className="flex h-6 w-[100px] items-center justify-center gap-1 rounded border border-[#d0d0d0] bg-white tracking-[-0.3px]">
            <svg viewBox="0 0 12 12" className="size-3 shrink-0" fill="none" stroke="#333"><path d="M.5 1.500h11v7H6L3 11V8.500H.5Z" /></svg>Comments
          </div>
          <div className="flex h-6 w-[68px] items-center justify-center gap-1 rounded bg-[#107c41] tracking-[-0.3px] text-white">
            <svg viewBox="0 0 12 12" className="size-3 shrink-0" fill="none" stroke="#fff"><path d="M3 4.500H.5v7h9V8M3 8.500c.3-3 2-4 4.500-4.100V2L11 5 7.500 7.800V6C5.500 6 4 6.800 3 8.500Z" /></svg>Share
          </div>
        </div>
      </div>
      <div className="mt-2 flex h-[26px] shrink-0 items-center pl-2 pr-[8px] text-[13px] tracking-[-0.45px] [&>div]:border-[#cfcfcf]">
        <div className="flex h-full w-[102px] items-center justify-between rounded border bg-white pl-[7px] pr-[5px]">D8
          <svg viewBox="0 0 12 8" className="h-[7px] w-[11px]" fill="none" stroke="#444" strokeWidth="1.500"><path d="m1 1 5 5 5-5" /></svg></div>
        <svg viewBox="0 0 4 12" className="ml-2 h-3 w-1" fill="#555"><path d="M1 1h2v2H1ZM1 5h2v2H1ZM1 9h2v2H1Z" /></svg>
        <div className="ml-2 flex h-full w-[74px] items-center rounded border bg-white pl-[6px]">
          <svg viewBox="0 0 12 12" className="size-3" stroke="#e5413c" strokeWidth="1.300"><path d="m.5.5 11 11M11.500.5l-11 11" /></svg>
          <svg viewBox="0 0 16 12" className="ml-[10px] h-3 w-4" fill="none" stroke="#4aa564" strokeWidth="1.400"><path d="m.5 6 5 5L15.500 1" /></svg>
          <span className="ml-[10px] font-['Liberation_Serif',serif] text-[18px] italic leading-none tracking-[0.2px] [-webkit-text-stroke:0.2px_#262626]">fx</span>
        </div>
        <div className="ml-1 flex h-full flex-1 items-center justify-between rounded border bg-white pl-[11px] pr-[3px]">25021540
          <svg viewBox="0 0 12 8" className="mt-[-4px] h-[7px] w-[11px]" fill="none" stroke="#444" strokeWidth="1.500"><path d="m1 1 5 5 5-5" /></svg></div>
      </div>
      <div className="h-[7px] shrink-0" />
      <Sheet />
      <div className="flex h-7 shrink-0 items-stretch bg-[#f5f5f5] text-[13px] text-[#444]">
        <div className="flex w-[100px] items-center border-r border-[#999] pl-[27px]"><Tri dir="left" className="h-[7px] w-1 text-[#bbb]" /><Tri dir="right" className="ml-[25px] h-[7px] w-1 text-[#0e6b3a]" /></div>
        <div className="relative mt-[-1px] flex h-[26px] w-[105px] items-center justify-center border-b-2 border-r border-b-[#217346] border-r-[#999] bg-white pt-[2px] font-bold tracking-[-0.45px] text-[#217346]">Precipitacion</div>
        <div className="my-1 flex w-[127px] items-center justify-center border-r border-[#aaa] pb-[2px] tracking-[-0.4px]">TemperaturaAire</div>
        <div className="my-1 flex w-[156px] items-center justify-center border-r border-[#aaa] pb-[2px] pr-[2px] tracking-[-0.4px]">EvaporacionPotencial</div>
        <div className="flex w-[28px] items-center overflow-hidden pb-[2px] pl-[12px]"><span className="w-[4px] overflow-hidden">C</span></div>
        <span className="w-[17px] self-center pb-1 text-[16px] font-bold leading-none text-[#107c41]">...</span>
        <div className="flex w-[29px] items-center pl-[6px]"><svg viewBox="0 0 16 16" className="size-4" fill="none" stroke="#666"><circle cx="8" cy="8" r="7.400" /><path d="M4 8h8M8 4v8" strokeWidth="1.800" /></svg></div>
        <div className="flex w-[28px] items-center justify-center bg-[#efefef]"><svg viewBox="0 0 4 12" className="h-3 w-1" fill="#a5a5a5"><path d="M1 1h2v2H1ZM1 5h2v2H1ZM1 9h2v2H1Z" /></svg></div>
        <div className="flex flex-1 items-center pl-[5px] pr-[27px] text-[#6e6e6e]">
          <Tri dir="left" className="h-[9px] w-[7px]" /><div className="ml-[5px] h-[9px] w-[38px] rounded-full bg-current" /><Tri dir="right" className="ml-auto h-[9px] w-[7px]" />
        </div>
      </div>
      <div className="flex h-[22px] shrink-0 items-center border-t-2 border-white bg-[#f3f3f3] pb-px pl-2 text-[12px] tracking-[-0.35px]">
        <span className="w-[50px]">Edit</span>
        <svg viewBox="0 0 16 16" className="size-[15px]" fill="none" stroke="#333" strokeWidth="1.100"><circle cx="6" cy="2.300" r="1.700" /><path d="M1 3.500c3 1.500 7 1.500 10 0l.5 1.500L8 6.500v3M1 3.500 .8 5 4 6.500 4 10l-2 5 1.500.5L6 11M8 12.500l2.500 2.500L15 9.500" /></svg>
        <span className="ml-[2px] mt-px">Accessibility: Good to go</span>
        <div className="ml-auto flex items-center pr-[19px] text-[#b5b5b5]">
          <svg viewBox="0 0 14 14" className="mr-[26px] size-[14px]" fill="none" stroke="currentColor"><path d="M.5.500h13v13H.5ZM.5 5h13M.5 9.500h13M5 .5v13M9.500.5v13" /></svg>
          <svg viewBox="0 0 14 14" className="mr-[26px] size-[14px]" fill="none" stroke="currentColor"><path d="M.5.500h13v13H.5ZM3 2.500h8v9H3ZM4.500 5h5M4.500 7h5M4.500 9h5" /></svg>
          <svg viewBox="0 0 14 14" className="mr-[19px] size-[14px]" fill="none" stroke="currentColor"><path d="M.5.500h13v13H.5ZM5 .5v8H.5M5 8.500h4.500V.5" /></svg>
          <svg viewBox="0 0 126 12" className="h-3 w-[126px]" fill="none" stroke="currentColor"><path d="M0 5.500h8M118 5.500h8M122 1.500v8" /><path d="M13 6.500h100M63.500 4v5" stroke="#666" /></svg>
          <span className="ml-[13px] w-[28px] tracking-[-0.5px]">145%</span>
        </div>
      </div>
    </div>
  );
}

export default function App() {
  return (
    <div className="flex h-[1031px] w-[1919px] overflow-hidden">
      <Browser />
      <Excel />
    </div>
  );
}
